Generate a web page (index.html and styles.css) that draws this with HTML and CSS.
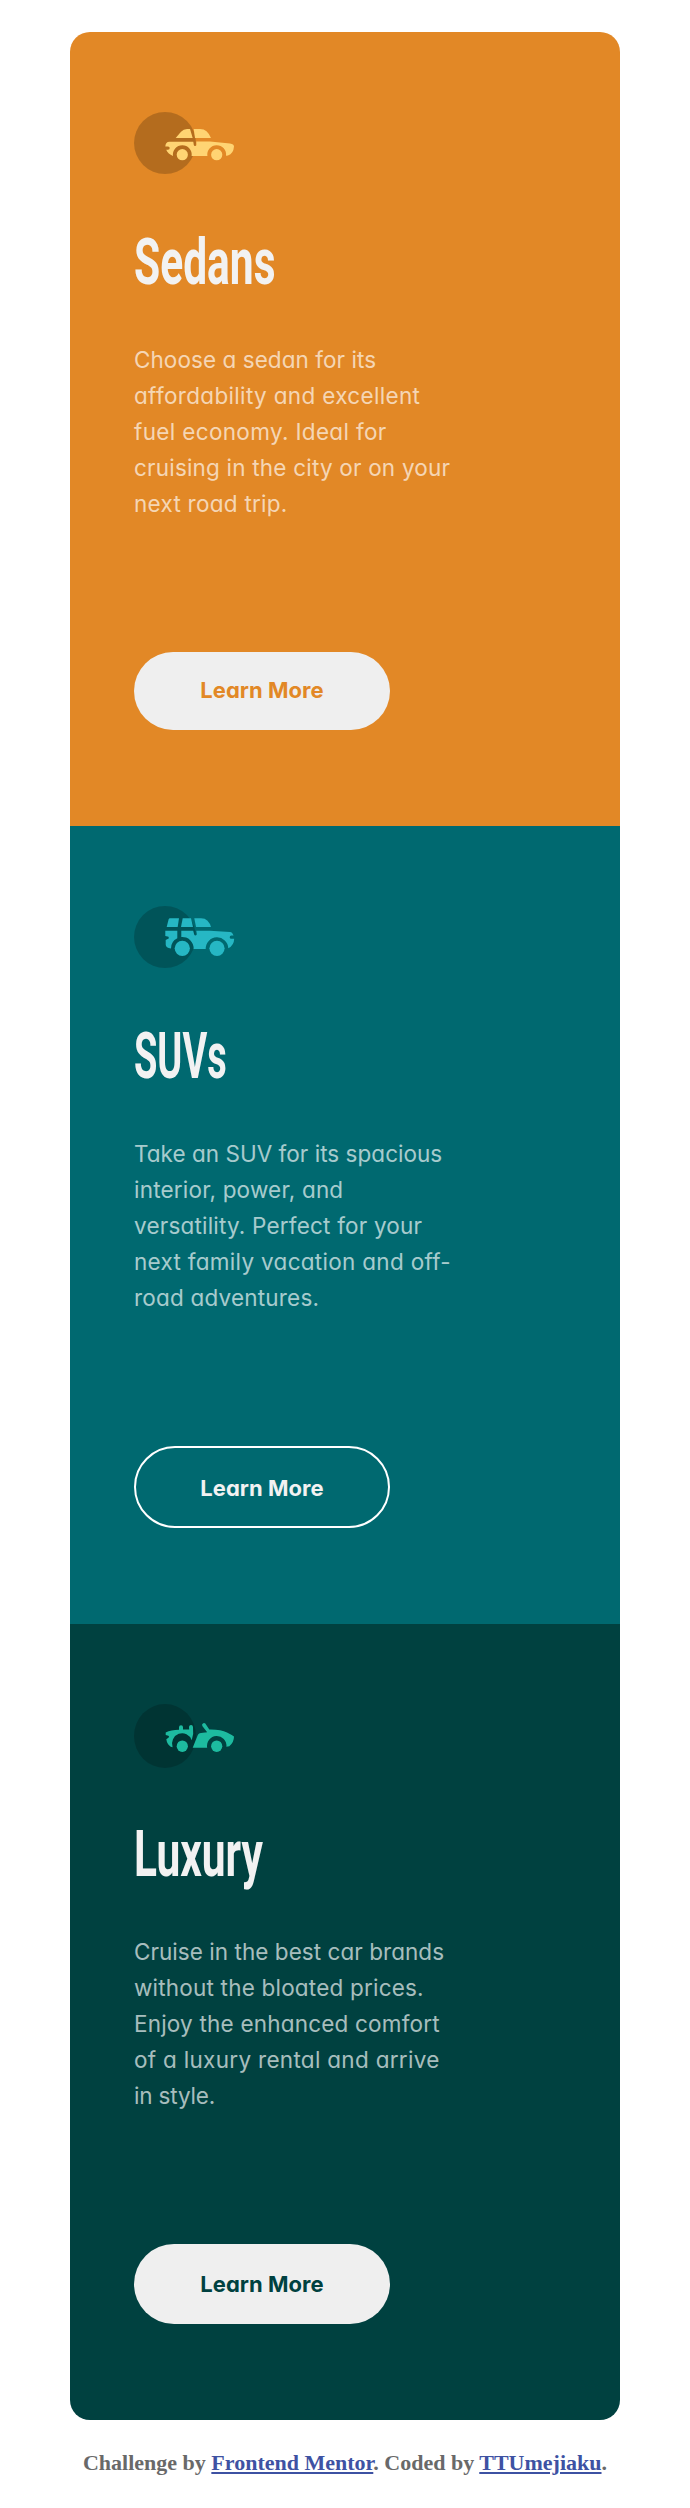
FILE: index.html
```html
<!DOCTYPE html>
<html lang="en">
<head>
<meta charset="utf-8">
<title>3-column preview card</title>
<link rel="stylesheet" href="styles.css">
</head>
<body>
<main class="cards">
  <section class="card sedans">
    <div class="icon">
      <svg width="102" height="62" viewBox="0 0 102 62">
        <circle cx="31" cy="31" r="31" fill="#000" fill-opacity=".2"/>
        <g fill="#ffd473">
          <path d="M41.7 26L47 19.8Q49.5 17 53 17H56L58.7 26Z"/>
          <path d="M59.7 17H66Q70 17 72.5 19.3Q75 21.5 77 26H61Z"/>
          <path d="M35.5 29.7H59.3L59.8 33c.3 1.6 3 1 2.6-.6L62.3 29.4H76L96 31.5Q100 32 100 34.5Q99.5 41.5 94 43.6L92 43.8A9.4 9.4 0 1 0 73.4 44H57.6A9.4 9.4 0 1 0 39 44Q34 42 32.2 37.8H34a1.6 1.6 0 0 0 0-3.4H31.3Q31.5 29.7 35.5 29.7Z"/>
          <circle cx="48.3" cy="42.7" r="5.6"/>
          <circle cx="82.7" cy="42.7" r="5.6"/>
        </g>
      </svg>
    </div>
    <h2 class="title"><span class="word">Sedans</span></h2>
    <p class="text">
      <span class="line l1">Choose a sedan for its</span>
      <span class="line l2">affordability and excellent</span>
      <span class="line l3">fuel economy. Ideal for</span>
      <span class="line l4">cruising in the city or on your</span>
      <span class="line l5">next road trip.</span>
    </p>
    <button class="more" type="button">Learn More</button>
  </section>

  <section class="card suvs">
    <div class="icon">
      <svg width="102" height="62" viewBox="0 0 102 62">
        <circle cx="31" cy="31" r="31" fill="#000" fill-opacity=".2"/>
        <g fill="#26b7c4">
          <path d="M36 12.3H45L43.7 21H32.7L34.6 13.4Q35 12.3 36 12.3Z"/>
          <path d="M48.7 12.3H57L59 21H47Z"/>
          <path d="M60.3 12.3H67Q71 12.3 73.5 14.7Q76 17.2 77 21H62Z"/>
          <path d="M31.3 24.7H43.3V32.2A11.3 11.3 0 0 0 37 42.5Q31.7 42 31.7 38.5V34L33.6 33a1.2 1.2 0 0 0 0-2.4L31.3 30Z"/>
          <path d="M47.3 24.7H59.2L60.2 28.6c.6 1.6 3 .8 2.6-.8L62.3 24.7H76L96 26Q98.5 26.3 99.5 29.6H97.3a1.5 1.5 0 0 0 0 3.2H100.2Q100 39.5 94.3 42.3A11.3 11.3 0 0 0 71.7 43H59.6A11.3 11.3 0 0 0 47.3 31Z"/>
          <circle cx="48.3" cy="42.3" r="7.6"/>
          <circle cx="83" cy="42.3" r="7.6"/>
        </g>
      </svg>
    </div>
    <h2 class="title"><span class="word">SUVs</span></h2>
    <p class="text">
      <span class="line l1">Take an SUV for its spacious</span>
      <span class="line l2">interior, power, and</span>
      <span class="line l3">versatility. Perfect for your</span>
      <span class="line l4">next family vacation and off-</span>
      <span class="line l5">road adventures.</span>
    </p>
    <button class="more" type="button">Learn More</button>
  </section>

  <section class="card luxury">
    <div class="icon">
      <svg width="102" height="64" viewBox="0 0 102 64">
        <ellipse cx="31" cy="32" rx="31" ry="32" fill="#000" fill-opacity=".2"/>
        <g fill="#1dbba0">
          <path d="M31.7 28.5Q37 25.8 45 25.7V23.3a2 2 0 0 1 4 0V25.4H55.2L55 23.3a2 2 0 0 1 4-.4Q60 30 57.7 36.2A9.7 10 0 0 0 38.6 43.2L36.7 42.8Q33 40 32.3 35.2L34.4 33.8a1.2 1.2 0 0 0 0-2L31.7 31Z"/>
          <path d="M68.3 22Q67.5 20 69.3 19.2Q70.4 18.7 71.3 19.6L75.3 25.4Q87 25.2 93 28.4Q98 30.8 100 32.6Q100 38.5 95.3 42.3L92.4 42.8A9.7 10 0 1 0 73.2 43.7H58.7L63.7 31.2Q65 28.8 69 28.8L73.2 28.2Z"/>
          <ellipse cx="48.3" cy="42.2" rx="5.6" ry="5.8"/>
          <ellipse cx="82.7" cy="42.2" rx="5.6" ry="5.8"/>
        </g>
      </svg>
    </div>
    <h2 class="title"><span class="word">Luxury</span></h2>
    <p class="text">
      <span class="line l1">Cruise in the best car brands</span>
      <span class="line l2">without the bloated prices.</span>
      <span class="line l3">Enjoy the enhanced comfort</span>
      <span class="line l4">of a luxury rental and arrive</span>
      <span class="line l5">in style.</span>
    </p>
    <button class="more" type="button">Learn More</button>
  </section>
</main>
<footer class="attribution">Challenge by <a href="#">Frontend Mentor</a>. Coded by <a href="#">TTUmejiaku</a>.</footer>
</body>
</html>
```
FILE: styles.css
```css
* {
  box-sizing: border-box;
}

body {
  margin: 0;
  padding: 32px 70px 0;
  background: #fff;
}

.cards {
  display: flex;
  flex-direction: column;
  border-radius: 20px;
  overflow: hidden;
}

.card {
  display: flex;
  flex-direction: column;
  align-items: flex-start;
  padding: 80px 64px 96px;
}

.sedans { background: #e28826; }
.suvs { background: #006970; }
.luxury { background: #004140; }

.icon {
  height: 64px;
  margin-bottom: 54px;
}

.icon svg {
  display: block;
}

.title {
  margin: 0 0 47px;
  font: bold 65px/65px Roboto, sans-serif;
  color: #f2f2f2;
}

/* condensed display lettering */
.word {
  display: inline-block;
  transform-origin: left;
}

.sedans .word { transform: scaleX(0.654); }
.suvs .word { transform: scaleX(0.584); }
.luxury .word { transform: scaleX(0.653); }

.text {
  margin: 0 0 130px;
  font: 22.5px/36px Inter, sans-serif;
  font-feature-settings: "cv11";
  color: rgba(255, 255, 255, 0.67);
}

.line {
  display: block;
  white-space: nowrap;
}

.sedans .l1 { letter-spacing: 0.06px; }
.sedans .l2 { letter-spacing: 0.34px; }
.sedans .l3 { letter-spacing: 0.34px; }
.sedans .l4 { letter-spacing: 0.2px; }
.sedans .l5 { letter-spacing: 0.26px; }
.suvs .l1 { letter-spacing: 0.03px; }
.suvs .l2 { letter-spacing: 0.2px; }
.suvs .l3 { letter-spacing: 0.2px; }
.suvs .l4 { letter-spacing: 0.3px; }
.suvs .l5 { letter-spacing: 0.2px; }
.luxury .l1 { letter-spacing: 0.05px; }
.luxury .l2 { letter-spacing: 0.2px; }
.luxury .l3 { letter-spacing: 0.2px; }
.luxury .l4 { letter-spacing: 0.3px; }
.luxury .l5 { letter-spacing: -0.17px; }

.more {
  width: 256px;
  height: 80px;
  padding: 0;
  border: 0;
  border-radius: 40px;
  background: #efefef;
  font: bold 22px/26px Inter, sans-serif;
  font-feature-settings: "cv11";
  letter-spacing: 0.05px;
}

.sedans .more {
  height: 78px;
  padding-bottom: 2px;
  color: #e28826;
}

.suvs .more {
  height: 82px;
  padding-top: 2px;
  border: 2px solid #fff;
  border-radius: 41px;
  background: transparent;
  color: #f2f2f2;
}

.luxury .more { color: #004140; }

.attribution {
  height: 58px;
  margin-top: 30px;
  font: bold 22px/25px "Liberation Serif", serif;
  text-align: center;
  white-space: nowrap;
  color: #696969;
}

.attribution a {
  color: #3e52a3;
}
```
